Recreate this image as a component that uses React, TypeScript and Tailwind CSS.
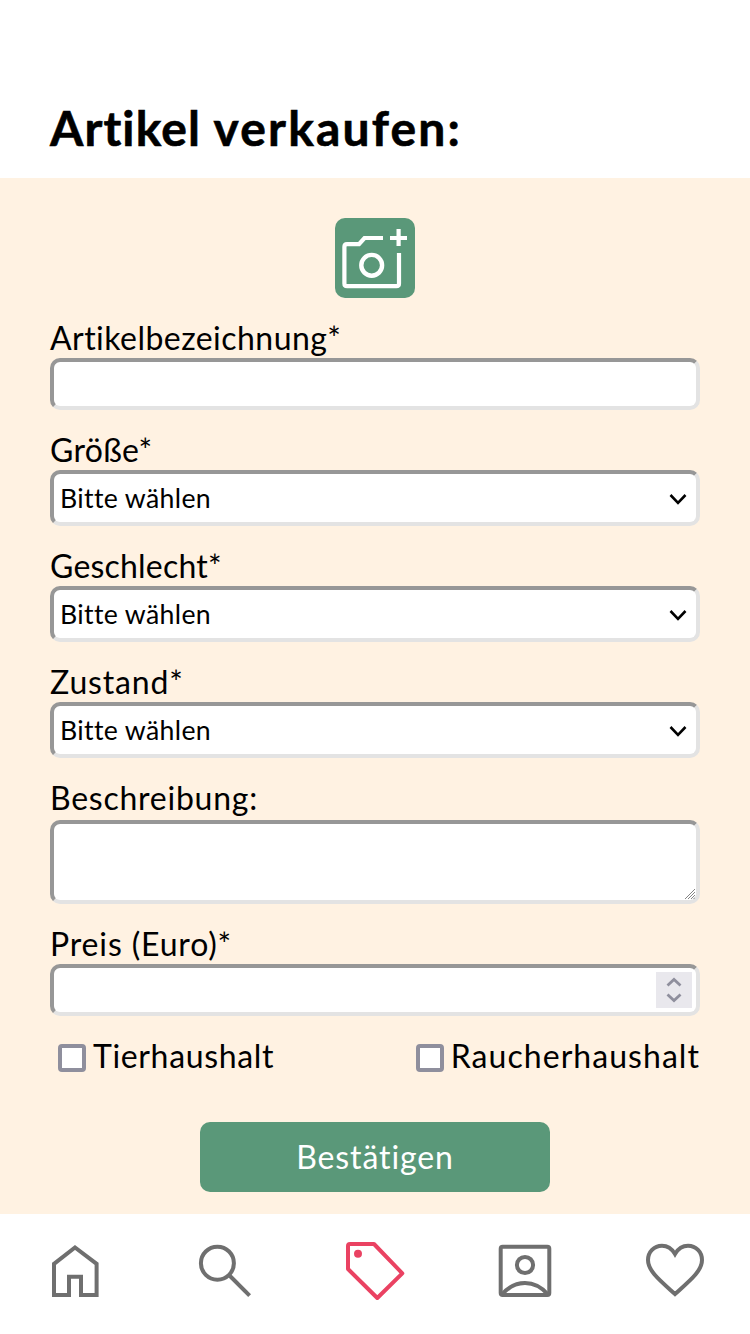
import React from "react";

const sunken =
  "w-full rounded-[10px] border-4 border-t-[#979797] border-l-[#979797] border-r-[#e3e3e3] border-b-[#e3e3e3] bg-white outline-none";

function Label({ children, className }: { children: React.ReactNode; className: string }) {
  return <span className={`block h-10 whitespace-nowrap text-[32px] leading-10 ${className}`}>{children}</span>;
}

function SelectField({ label, className }: { label: string; className: string }) {
  return (
    <div>
      <Label className={className}>{label}</Label>
      <button className={`${sunken} flex h-14 items-center justify-between pl-1.5 pr-[9px] text-left`}>
        <span className="whitespace-nowrap text-[26.67px] leading-8 tracking-[0.35px]">Bitte wählen</span>
        <svg className="mt-0.5" width="18" height="12" viewBox="0 0 18 12" fill="none" stroke="#000" strokeWidth="2.6">
          <path d="M1.5 2 9 9.8 16.5 2" />
        </svg>
      </button>
    </div>
  );
}

function Check({ label, className }: { label: string; className: string }) {
  return (
    <label className="flex h-10 items-center">
      <input
        type="checkbox"
        className="mt-1 h-7 w-7 appearance-none rounded-[4px] border-4 border-[#8f8f9d] bg-white"
      />
      <span className={`ml-[7px] whitespace-nowrap text-[32px] leading-10 ${className}`}>{label}</span>
    </label>
  );
}

function NavItem({ children, active }: { children: React.ReactNode; active?: boolean }) {
  return (
    <a className={`flex flex-1 justify-center ${active ? "text-[#ea4262]" : "text-[#6f6f6f]"}`}>
      <svg width="60" height="60" viewBox="0 0 60 60" fill="none" stroke="currentColor" strokeWidth="4">
        {children}
      </svg>
    </a>
  );
}

export default function App() {
  return (
    <div className="flex h-[1334px] w-[750px] flex-col overflow-hidden bg-white font-['Lato',sans-serif] text-black">
      <header className="h-[178px] px-[50px] pt-[98px]">
        <h1 className="whitespace-nowrap text-[48px] font-bold leading-[60px] tracking-[2.15px] [-webkit-text-stroke:0.6px_#000]">
          <span className="tracking-[1.1px]">Artikel</span> verkaufen:
        </h1>
      </header>

      <main className="flex h-[1036px] flex-col gap-5 bg-[#fff2e2] px-[50px] pt-10">
        <button className="h-20 w-20 shrink-0 self-center rounded-[10px] bg-[#5a9879]">
          <svg width="80" height="80" viewBox="0 0 80 80" fill="none" stroke="#fff" strokeWidth="4.2">
            <path d="M48 20H29.5L24 26.2H12Q9.4 26.2 9.4 28.8V65.6Q9.4 68.2 12 68.2H61.4Q64 68.2 64 65.6V35" />
            <circle cx="36.7" cy="47.3" r="10.4" strokeWidth="4.4" />
            <path d="M55 20H72M63.6 11V28" />
          </svg>
        </button>

        <div>
          <Label className="tracking-[0.46px]">Artikelbezeichnung*</Label>
          <input className={`${sunken} block h-[52px]`} />
        </div>

        <SelectField label="Größe*" className="tracking-[0.3px]" />
        <SelectField label="Geschlecht*" className="tracking-[0.2px]" />
        <SelectField label="Zustand*" className="tracking-[0.85px]" />

        <div>
          <Label className="tracking-[0.75px]">Beschreibung:</Label>
          <div className="relative mt-0.5">
            <textarea className={`${sunken} block h-[84px] resize-none`} />
            <svg
              className="absolute bottom-[5px] right-[5px]"
              width="10"
              height="10"
              viewBox="0 0 10 10"
              stroke="#777"
              strokeWidth="0.9"
            >
              <path d="M0 10 10 0M3 10 10 3M6 10 10 6M8.5 10 10 8.5" />
            </svg>
          </div>
        </div>

        <div>
          <Label className="tracking-[0.85px]">Preis (Euro)*</Label>
          <div className={`${sunken} flex h-[52px] items-center pr-1`}>
            <input className="h-full min-w-0 flex-1 outline-none" inputMode="decimal" />
            <span className="flex h-9 w-9 items-center justify-center bg-[#e9e8ed]">
              <svg width="36" height="36" viewBox="0 0 36 36" fill="none" stroke="#8f8f9d" strokeWidth="2.8">
                <path d="M11.5 13.5 18 7.5 24.5 13.5M11.5 22.5 18 28.5 24.5 22.5" />
              </svg>
            </span>
          </div>
        </div>

        <div className="flex justify-between pl-2">
          <Check label="Tierhaushalt" className="tracking-[0.65px]" />
          <Check label="Raucherhaushalt" className="tracking-[1.05px]" />
        </div>

        <button className="mt-[26px] h-[70px] w-[350px] shrink-0 self-center rounded-[10px] bg-[#5a9879] text-[32px] leading-10 tracking-[0.9px] text-white">
          Bestätigen
        </button>
      </main>

      <nav className="flex h-[120px] pt-[27px]">
        <NavItem>
          <path d="M9 22.8 30 6.4 51.6 22.8V54H36V35.8H24V54H9Z" />
        </NavItem>
        <NavItem>
          <circle cx="22.4" cy="22.2" r="16.5" />
          <path d="M34 34 54.6 54.6" />
        </NavItem>
        <NavItem active>
          <path d="M5 3H29L57.3 32.3 32.3 57 3 28V5Q3 3 5 3Z" strokeLinejoin="round" />
          <circle cx="13" cy="12.7" r="4" fill="currentColor" stroke="none" />
        </NavItem>
        <NavItem>
          <rect x="5.7" y="5.7" width="48.6" height="48.4" rx="2" />
          <circle cx="30" cy="24" r="8.1" />
          <path d="M7 53.5Q17 42 30 42T53 53.5" />
        </NavItem>
        <NavItem>
          <path d="M30 13C27 8 22.5 4.8 17 4.8 9 4.8 3 11 3 19 3 30 15 39.5 30 53 45 39.5 57 30 57 19 57 11 51 4.8 43 4.8 37.5 4.8 33 8 30 13Z" />
        </NavItem>
      </nav>
    </div>
  );
}
